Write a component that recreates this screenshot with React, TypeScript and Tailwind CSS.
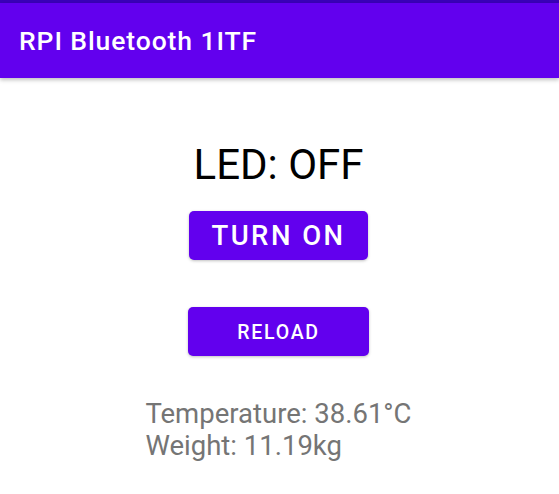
export default function App() {
  return (
    <main className="min-h-[494px] bg-white font-['Roboto',sans-serif]">
      <div className="h-[3px] bg-[#3a00b8]" />
      <header className="flex h-[75px] items-center bg-[#6200ee] pl-[19px] shadow-[0_2px_4px_rgba(0,0,0,0.25)]">
        <h1 className="text-[26.5px] font-medium tracking-[0.9px] text-white">RPI Bluetooth 1ITF</h1>
      </header>

      <section className="flex flex-col items-center pr-[2px] pt-[62px]">
        <p className="text-[42px] leading-[50px] text-black">LED: OFF</p>
        <button className="mt-[21px] h-[49px] w-[179px] rounded-[5px] bg-[#6200ee] text-[27.5px] font-medium tracking-[0.09em] text-white shadow-[0_1px_3px_rgba(0,0,0,0.25)]">
          TURN ON
        </button>
        <button className="mt-[47px] h-[49px] w-[181px] rounded-[5px] bg-[#6200ee] pt-[3px] text-[19.5px] font-medium tracking-[0.09em] text-white shadow-[0_1px_3px_rgba(0,0,0,0.25)]">
          RELOAD
        </button>
        <div className="mt-[42px] whitespace-nowrap text-[27.5px] leading-[32px] text-[#757575]">
          <p>Temperature: 38.61°C</p>
          <p>Weight: 11.19kg</p>
        </div>
      </section>
    </main>
  );
}
